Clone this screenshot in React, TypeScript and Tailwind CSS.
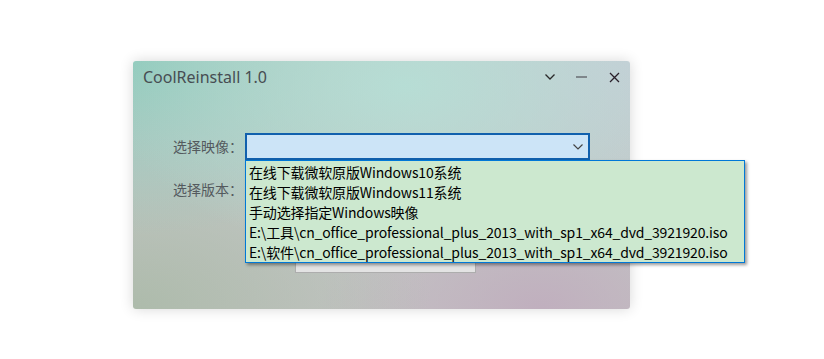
import React from "react";

const items = [
  "在线下载微软原版Windows10系统",
  "在线下载微软原版Windows11系统",
  "手动选择指定Windows映像",
  "E:\\工具\\cn_office_professional_plus_2013_with_sp1_x64_dvd_3921920.iso",
  "E:\\软件\\cn_office_professional_plus_2013_with_sp1_x64_dvd_3921920.iso",
];

export default function App() {
  return (
    <div className="w-[824px] h-[359px] bg-white pl-[133px] pt-[61px] font-['Noto_Sans','Noto_Sans_CJK_SC',sans-serif]">
      <div className="relative w-[497px] h-[248px] rounded-[3px] shadow-[0_0_14px_rgba(0,0,0,0.16)] bg-[radial-gradient(ellipse_60%_70%_at_55%_10%,rgba(182,223,214,0.9)_0%,transparent_100%),radial-gradient(ellipse_60%_70%_at_0%_0%,#92cbbd_0%,transparent_100%),radial-gradient(ellipse_60%_70%_at_100%_0%,#c6cdd6_0%,transparent_100%),radial-gradient(ellipse_60%_70%_at_0%_100%,#adbbab_0%,transparent_100%),radial-gradient(ellipse_45%_55%_at_82%_100%,#c0afbe_0%,transparent_100%),linear-gradient(#bfcbc6,#c4c4c4)]">
        {/* title bar */}
        <div className="flex items-center h-[32px] pl-[10px]">
          <div className="text-[16px] text-[#474d52] leading-none">CoolReinstall 1.0</div>
          <div className="ml-auto flex items-center h-full">
            <div className="w-[32px] flex justify-center">
              <svg width="12" height="8" viewBox="0 0 12 8">
                <path d="M1.5 1.5 L6 6 L10.5 1.5" fill="none" stroke="#2a2a2a" strokeWidth="1.3" />
              </svg>
            </div>
            <div className="w-[32px] flex justify-center">
              <svg width="12" height="4" viewBox="0 0 12 4">
                <path d="M0 2 H11" stroke="#6e7478" strokeWidth="1.6" />
              </svg>
            </div>
            <div className="w-[32px] flex justify-center">
              <svg width="11" height="11" viewBox="0 0 11 11">
                <path d="M1 1 L10 10 M10 1 L1 10" stroke="#2a1f2a" strokeWidth="1.3" />
              </svg>
            </div>
          </div>
        </div>

        {/* form */}
        <div className="pl-[40px] pt-[40px] flex flex-col">
          <div className="flex items-center h-[27px]">
            <div className="w-[72px] text-[14px] text-[#545a5e]">选择映像：</div>
            <div className="w-[345px] h-[27px] bg-[#cce4f7] border-[2px] border-[#1160ad] flex items-center justify-end pr-[4px]">
              <svg width="12" height="8" viewBox="0 0 12 8">
                <path d="M1.5 1.5 L6 6 L10.5 1.5" fill="none" stroke="#444" strokeWidth="1.2" />
              </svg>
            </div>
          </div>
          <div className="flex items-center h-[27px] mt-[16px]">
            <div className="w-[72px] text-[14px] text-[#545a5e]">选择版本：</div>
          </div>
          <div className="ml-[122px] mt-[50px] w-[181px] h-[20px] bg-[#e3e3e3] border border-[#adadad]" />
        </div>

        {/* dropdown list */}
        <div className="absolute left-[112px] top-[99px] w-[500px] h-[103px] bg-[#cce8cf] border border-[#0078d7] shadow-[2px_2px_3px_rgba(0,0,0,0.4)] pt-[1px] pl-[3px] font-['Noto_Sans_CJK_SC',sans-serif] tracking-[-0.15px]">
          {items.map((t) => (
            <div key={t} className="h-[20px] text-[14px] leading-[20px] text-black whitespace-nowrap">
              {t}
            </div>
          ))}
        </div>
      </div>
    </div>
  );
}
